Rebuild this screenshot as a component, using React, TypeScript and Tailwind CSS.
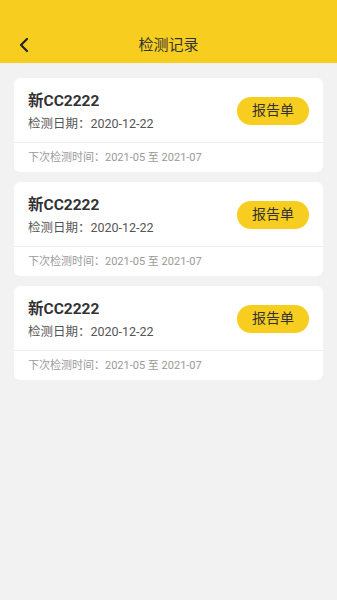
import { ChevronLeft } from "lucide-react";

const records = [
  { plate: "新CC2222", date: "2020-12-22", next: "2021-05 至 2021-07" },
  { plate: "新CC2222", date: "2020-12-22", next: "2021-05 至 2021-07" },
  { plate: "新CC2222", date: "2020-12-22", next: "2021-05 至 2021-07" },
];

export default function App() {
  return (
    <div
      className="min-h-[600px] w-full bg-[#f2f2f2]"
      style={{ fontFamily: 'Roboto, "Noto Sans CJK SC", sans-serif' }}
    >
      {/* header */}
      <div className="bg-[#f7cd1f] h-[63px] pt-[30px]">
        <div className="relative flex items-center justify-center h-[30px]">
          <button type="button" className="absolute left-[12px] top-[3px] text-[#222]">
            <ChevronLeft size={24} strokeWidth={2.2} />
          </button>
          <h1 className="text-[15px] text-[#333] leading-none">检测记录</h1>
        </div>
      </div>

      <div className="px-[14px] pt-[15px] flex flex-col gap-[10px]">
        {records.map((r, i) => (
          <div key={i} className="bg-white rounded-[6px]">
            <div className="h-[65px] flex items-center justify-between px-[14px] border-b border-[#ededed]">
              <div className="pt-[3px]">
                <p className="text-[15.5px] font-bold text-[#333] leading-[20px]">{r.plate}</p>
                <p className="text-[12.5px] text-[#555] leading-[18px] mt-[4px]">
                  检测日期：{r.date}
                </p>
              </div>
              <button
                type="button"
                className="w-[72px] h-[28px] rounded-full bg-[#f7cd1f] text-[14px] text-[#333] mt-[1px]"
              >
                报告单
              </button>
            </div>
            <div className="h-[29px] flex items-center pl-[14px] pt-[2px]">
              <p className="text-[11px] text-[#9a9a9a]">下次检测时间：{r.next}</p>
            </div>
          </div>
        ))}
      </div>
    </div>
  );
}
